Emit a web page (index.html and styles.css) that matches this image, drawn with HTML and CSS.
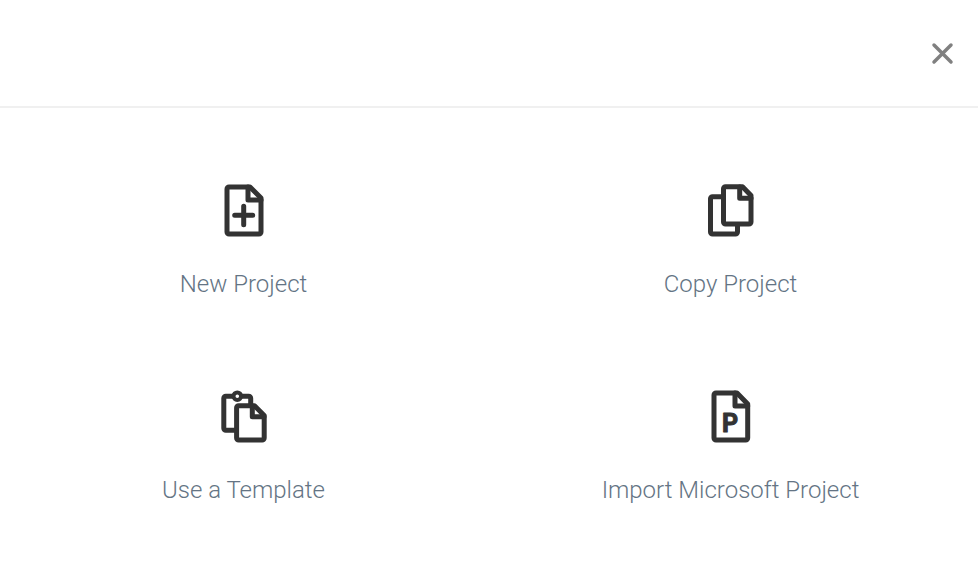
FILE: index.html
```html
<!DOCTYPE html>
<html lang="en">
<head>
  <meta charset="utf-8">
  <meta name="viewport" content="width=device-width, initial-scale=1">
  <title>Create Project</title>
  <link rel="stylesheet" href="styles.css">
</head>
<body>
  <header class="dialog-header">
    <button class="close" type="button" aria-label="Close">
      <svg width="24" height="24" viewBox="0 0 48 48" aria-hidden="true"><path d="M8 8 42 42M42 8 8 42"/></svg>
    </button>
  </header>
  <main class="options">
    <button class="option" type="button">
      <svg class="icon" viewBox="0 0 60 70" aria-hidden="true">
        <path d="M15 11H36L47 22V56a2 2 0 0 1-2 2H15a2 2 0 0 1-2-2V13a2 2 0 0 1 2-2Z"/>
        <path d="M34 11V24H47M29.7 30.3V48.7M20.7 39.3H38.7"/>
      </svg>
      <span>New Project</span>
    </button>
    <button class="option" type="button">
      <svg class="icon" viewBox="1 0 60 70" aria-hidden="true">
        <path d="M25.5 10.8H42.5L51 19.5V46a2 2 0 0 1-2 2H25.5a2 2 0 0 1-2-2V12.8a2 2 0 0 1 2-2Z"/>
        <path d="M39.7 11V22.3H51M23 20.8H12.5a2 2 0 0 0-2 2V56a2 2 0 0 0 2 2H35.5a2 2 0 0 0 2-2V49"/>
      </svg>
      <span>Copy Project</span>
    </button>
    <button class="option" type="button">
      <svg class="icon" viewBox="0 0 60 70" aria-hidden="true">
        <path d="M24.6 23.8H40.5L50.2 33.5V56a2 2 0 0 1-2 2H24.6a2 2 0 0 1-2-2V25.8a2 2 0 0 1 2-2Z"/>
        <path d="M38.3 24V34.8H50M22 48.3H11.8a2 2 0 0 1-2-2V16.3a2 2 0 0 1 2-2H19.5M27 14.3H34.7a2 2 0 0 1 2 2V23"/>
        <circle class="clip" cx="23.3" cy="14.2" r="3.8"/>
      </svg>
      <span>Use a Template</span>
    </button>
    <button class="option" type="button">
      <svg class="icon" viewBox="1 0 60 70" aria-hidden="true">
        <path d="M16 11H37L47.7 22V56a2 2 0 0 1-2 2H16a2 2 0 0 1-2-2V13a2 2 0 0 1 2-2Z"/>
        <path d="M35 11V24H47.7"/>
        <text class="letter" x="22" y="50">P</text>
      </svg>
      <span>Import Microsoft Project</span>
    </button>
  </main>
</body>
</html>
```
FILE: styles.css
```css
* {
  box-sizing: border-box;
}

body {
  margin: 0;
  background: #fff;
  font-family: Roboto, "Liberation Sans", sans-serif;
}

button {
  padding: 0;
  border: 0;
  background: none;
  font: inherit;
  cursor: pointer;
}

svg {
  display: block;
  fill: none;
}

.dialog-header {
  display: flex;
  justify-content: flex-end;
  padding: 41px 24px;
  border-bottom: 2px solid #f0f0f0;
}

.close {
  stroke: #808080;
  stroke-width: 7;
  stroke-linecap: round;
}

.options {
  display: grid;
  grid-template-columns: 1fr 1fr;
  row-gap: 82px;
  padding: 68px 4px 68px 0;
}

.option {
  display: flex;
  flex-direction: column;
  align-items: center;
  gap: 22px;
  color: #647484;
  font-size: 24px;
  font-weight: 300;
  line-height: 32px;
}

.icon {
  width: 60px;
  height: 70px;
  stroke: #333;
  stroke-width: 5;
  stroke-linejoin: round;
}

.icon path {
  stroke-linecap: round;
}

.clip {
  fill: #fff;
  stroke-width: 4;
}

.letter {
  fill: #333;
  stroke: #333;
  stroke-width: 1;
  font-family: Roboto, sans-serif;
  font-size: 25px;
  font-weight: 700;
}
```
